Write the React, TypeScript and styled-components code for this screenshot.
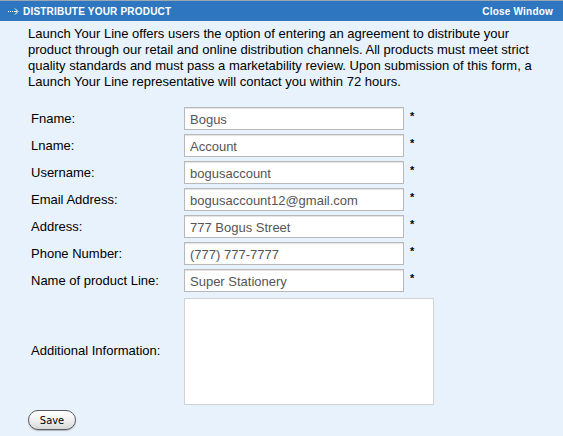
import { FC, Fragment } from 'react';
import styled, { createGlobalStyle } from 'styled-components';

const GlobalStyle = createGlobalStyle`
  html, body {
    margin: 0;
    padding: 0;
    background: #e7f2fc;
  }
`;

const Window = styled.div`
  width: 563px;
  height: 436px;
  background: #e7f2fc;
  font-family: 'Liberation Sans', Arial, sans-serif;
  color: #000;
  overflow: hidden;
`;

const TitleBar = styled.div`
  display: flex;
  justify-content: space-between;
  align-items: center;
  height: 20px;
  border-top: 1px solid #9aa6b2;
  background: #2e77c0;
  padding: 0 10px 0 8px;
  color: #fff;
  font-family: 'Liberation Sans', Arial, sans-serif;
  font-weight: bold;
  font-size: 10px;
`;

const Title = styled.span`
  display: flex;
  align-items: center;
  gap: 4px;
  letter-spacing: 0.2px;
`;

const Close = styled.a`
  color: #fff;
  text-decoration: none;
  letter-spacing: 0.2px;
  cursor: pointer;
`;

const Intro = styled.p`
  margin: 5px 0 0 28px;
  font-size: 13px;
  line-height: 16px;
`;

const Form = styled.form`
  display: grid;
  grid-template-columns: 147px 220px auto;
  column-gap: 6px;
  row-gap: 4px;
  align-items: center;
  margin: 17px 0 0 31px;
`;

const Label = styled.label`
  font-size: 13px;
`;

const Input = styled.input`
  box-sizing: border-box;
  width: 220px;
  height: 23px;
  margin: 0;
  padding: 2px 5px 0;
  border: 1px solid #b9b9b9;
  box-shadow: inset 0 1px 1px #e4e4e4;
  background: #fff;
  color: #555;
  font-family: 'Liberation Sans', Arial, sans-serif;
  font-size: 13px;
  outline: none;
`;

const Required = styled.span`
  align-self: start;
  margin-top: 4px;
  font-size: 11px;
  font-weight: bold;
  line-height: 11px;
`;

const TextArea = styled.textarea`
  box-sizing: border-box;
  width: 250px;
  height: 107px;
  margin: 2px 0 0;
  border: 1px solid #cfd3d6;
  background: #fff;
  resize: none;
  outline: none;
`;

const SaveButton = styled.button`
  margin: 5px 0 0 28px;
  width: 48px;
  height: 20px;
  border: 1px solid #5a5a5a;
  border-radius: 10px;
  background: linear-gradient(#ffffff 0%, #f1f1f1 50%, #d9d9d9 100%);
  box-shadow: 0 1px 1px rgba(0, 0, 0, 0.25);
  font-family: 'DejaVu Sans Condensed', 'DejaVu Sans', sans-serif;
  font-size: 11px;
  color: #000;
  padding: 0;
  cursor: pointer;
`;

const Arrow: FC = () => (
  <svg width="11" height="7" viewBox="0 0 11 7">
    <rect x="0" y="3" width="1" height="1" fill="#fff" />
    <rect x="2" y="3" width="1" height="1" fill="#fff" />
    <rect x="4" y="3" width="1" height="1" fill="#fff" />
    <path d="M6 3.5h3" stroke="#fff" strokeWidth="1" />
    <path d="M7 0.5 L10 3.5 L7 6.5" stroke="#fff" strokeWidth="1" fill="none" />
  </svg>
);

const fields = [
  { label: 'Fname:', value: 'Bogus' },
  { label: 'Lname:', value: 'Account' },
  { label: 'Username:', value: 'bogusaccount' },
  { label: 'Email Address:', value: 'bogusaccount12@gmail.com' },
  { label: 'Address:', value: '777 Bogus Street' },
  { label: 'Phone Number:', value: '(777) 777-7777' },
  { label: 'Name of product Line:', value: 'Super Stationery' },
];

const App: FC = () => (
  <Window>
    <GlobalStyle />
    <TitleBar>
      <Title>
        <Arrow />
        DISTRIBUTE YOUR PRODUCT
      </Title>
      <Close>Close Window</Close>
    </TitleBar>
    <Intro>
      Launch Your Line offers users the option of entering an agreement to distribute your
      <br />
      product through our retail and online distribution channels. All products must meet strict
      <br />
      quality standards and must pass a marketability review. Upon submission of this form, a
      <br />
      Launch Your Line representative will contact you within 72 hours.
    </Intro>
    <Form onSubmit={(e) => e.preventDefault()}>
      {fields.map((f) => (
        <Fragment key={f.label}>
          <Label>{f.label}</Label>
          <Input defaultValue={f.value} />
          <Required>*</Required>
        </Fragment>
      ))}
      <Label>Additional Information:</Label>
      <TextArea />
      <span />
    </Form>
    <SaveButton type="button">Save</SaveButton>
  </Window>
);

export default App;
